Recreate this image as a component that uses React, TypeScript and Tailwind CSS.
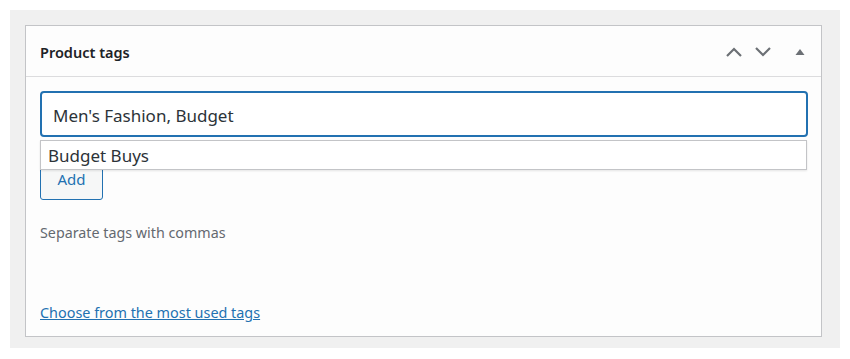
import React from "react";

export default function App() {
  return (
    <div className="w-[850px] h-[359px] bg-white pt-[10px] pl-[10px]" style={{ fontFamily: '"Noto Sans", "Open Sans", sans-serif' }}>
      <div className="w-[830px] h-[338px] bg-[#f0f0f0] pt-[15px] pl-[15px]">
        <div className="w-[797px] h-[312px] bg-[#fdfdfd] border border-[#c3c4c7] flex flex-col">
          <div className="h-[51px] border-b border-[#dcdcde] flex items-center pl-[14px] pr-[14px]">
            <h2 className="text-[14.5px] font-semibold text-[#1d2327] flex-1 leading-none pt-[3px]">Product tags</h2>
            <div className="flex items-center pt-[1px]">
              <svg width="18" height="12" viewBox="0 0 18 12" className="mr-[11px]">
                <path d="M2 10 L9 3 L16 10" fill="none" stroke="#6c7075" strokeWidth="2.2" />
              </svg>
              <svg width="18" height="12" viewBox="0 0 18 12" className="mr-[23px]">
                <path d="M2 2 L9 9 L16 2" fill="none" stroke="#6c7075" strokeWidth="2.2" />
              </svg>
              <svg width="10" height="8" viewBox="0 0 10 8" className="mr-[2px]">
                <path d="M0.5 7 L5 1 L9.5 7 Z" fill="#6c7075" />
              </svg>
            </div>
          </div>
          <div className="relative px-[14px] pt-[14px] flex flex-col">
            <div className="w-[768px] h-[46px] border-2 border-[#2271b1] rounded-[4px] bg-white flex items-center pl-[11px] pt-[3px] text-[17px] text-[#2c3338]">
              Men's Fashion, Budget
            </div>
            <div className="absolute left-[14px] top-[63px] w-[767px] h-[30px] bg-white border border-[#c3c4c7] shadow-[0_1px_2px_rgba(0,0,0,0.1)] flex items-center pl-[7px] pt-[1px] text-[17px] text-[#2c3338] z-10">
              Budget Buys
            </div>
            <button className="mt-[29px] w-[63px] h-[34px] border border-[#2271b1] rounded-[3px] bg-[#f6f7f7] text-[#2271b1] text-[15px] leading-[20px] pb-[8px] text-center">
              Add
            </button>
            <p className="mt-[24px] text-[14.3px] text-[#646970] leading-[18px]">Separate tags with commas</p>
            <a href="#" className="mt-[62px] text-[14.4px] text-[#2271b1] underline leading-[18px] w-max">Choose from the most used tags</a>
          </div>
        </div>
      </div>
    </div>
  );
}
